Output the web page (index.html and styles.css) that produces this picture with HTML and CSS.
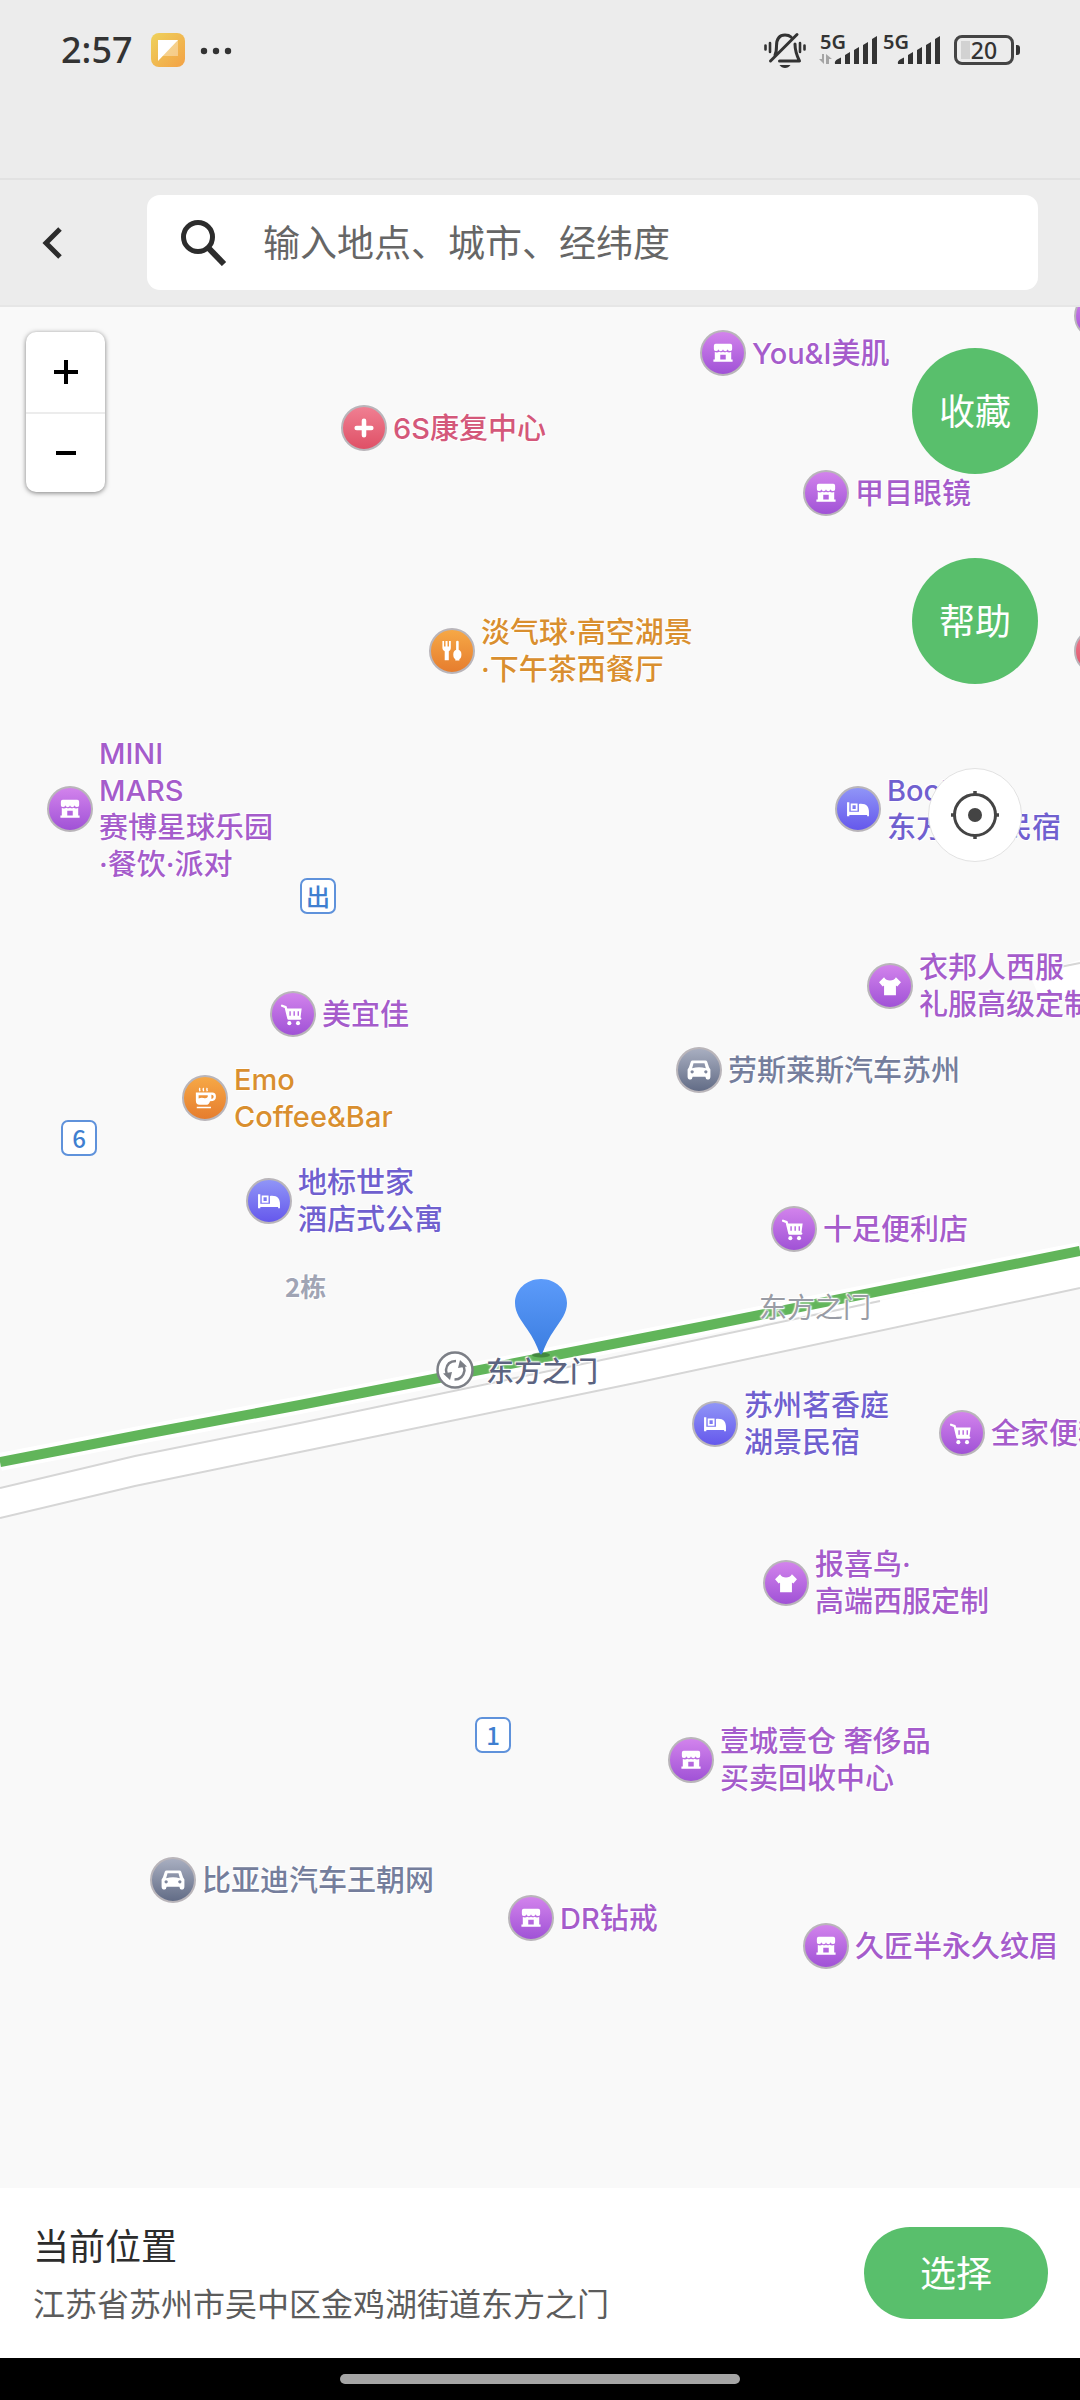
FILE: index.html
```
<!DOCTYPE html>
<html lang="zh-CN">
<head>
	<meta charset="UTF-8">
	<meta name="viewport" content="width=device-width, initial-scale=1">
	<title>选择位置</title>
	<link rel="stylesheet" href="styles.css">
</head>
<body>
	<!-- 图标 -->
	<svg class="sprite" aria-hidden="true">
		<symbol id="i-shop" viewBox="0 0 46 46">
			<path fill="#fff" d="M15 13h16q2 0 2 2v3.500a2.500 2 0 0 1-5 .5 2.500 2 0 0 1-5 0 2.500 2 0 0 1-5 0 2.500 2 0 0 1-5-.5V15q0-2 2-2z"/>
			<path fill="#fff" fill-rule="evenodd" d="M14 22q3 1 5-.5 2 1.200 4 0 2 1.200 4 0 2 1.500 5 .5v8h1.500v2.500h-21V30H14zM20 25v5h6v-5z"/>
		</symbol>
		<symbol id="i-cart" viewBox="0 0 46 46">
			<path fill="none" stroke="#fff" stroke-width="2.500" stroke-linecap="round" stroke-linejoin="round" d="M11 14l4 1.500 3 12.500h13"/>
			<path fill="#fff" fill-rule="evenodd" d="M16 17h16.500l-1.500 11.500H18.500zM19 20v5h1.600v-5zM23.500 20v5h1.600v-5zM28 20v5h1.600v-5z"/>
			<circle fill="#fff" cx="19" cy="33" r="2.200"/><circle fill="#fff" cx="28.500" cy="33" r="2.200"/>
		</symbol>
		<symbol id="i-bed" viewBox="0 0 46 46">
			<path fill="#fff" d="M11 15.500h2.500V26H35v5h-2v-1.500H13.500V31H11z"/>
			<path fill="#fff" fill-rule="evenodd" d="M15 17h7.500v8H15zM17 19v4h3.500v-4z"/>
			<path fill="#fff" d="M24 17.500c8-1 11 3 11 9H24z"/>
		</symbol>
		<symbol id="i-shirt" viewBox="0 0 46 46">
			<path fill="#fff" d="M16.500 13.500q2 3.500 6.500 3.500t6.500-3.500L35 19l-4 4.500-1.500-1V33h-13V22.500l-1.500 1L11 19z"/>
		</symbol>
		<symbol id="i-car" viewBox="0 0 46 46">
			<path fill="#fff" fill-rule="evenodd" d="M16 12.500h14q1.500 0 2 1.500l2 6 1.500 2.500V30q0 3.500-3.500 3.500-1.500 0-2-3H16q-.5 3-2 3-3.500 0-3.500-3.500v-7.500L12 20l2-6q.5-1.500 2-1.500zM17 15.500L15.500 21q7.500-2 15 0L29 15.500z"/>
			<circle fill="#7f879d" cx="15.500" cy="25" r="1.800"/><circle fill="#7f879d" cx="30.500" cy="25" r="1.800"/>
		</symbol>
		<symbol id="i-food" viewBox="0 0 46 46">
			<path fill="#fff" d="M12.500 12h1.800v6h1.600v-6h2.200v6h1.600v-6h2v8q0 2.500-2.200 3.200V33h-4.500v-9.800q-2.500-.7-2.500-3.200z"/>
			<path fill="#fff" d="M27.500 13q0-1.200 1.400-1.200t1.400 1.200v8.500q3 1 3 5.200t-2.200 5v1.800h-4.500v-1.800q-2.200-.8-2.200-5t3.100-5.200z"/>
		</symbol>
		<symbol id="i-cup" viewBox="0 0 46 46">
			<path fill="none" stroke="#fff" stroke-width="1.600" d="M17.500 12q-1 1 0 3.500M21.500 12q-1 1 0 3.500M25.500 12q-1 1 0 3.500"/>
			<path fill="#fff" fill-rule="evenodd" d="M13 17h17q5-.5 5 4.500T28.500 26.500q-1 4-4.500 4h-7q-4 0-4-4.500zM30 19.500v4.500q2.500 0 2.500-2.300T30 19.500zM16 20v3.500q3-1.500 5.500-.5T26 22v-2z"/>
			<path fill="#fff" d="M14 32.500h15.500v1.800H14z"/>
		</symbol>
		<symbol id="i-plus" viewBox="0 0 46 46">
			<path stroke="#fff" stroke-width="5" stroke-linecap="round" d="M23 15v16M15 23h16"/>
		</symbol>
	</svg>

	<!-- 状态栏 -->
	<div class="status">
		<span class="time">2:57</span>
		<svg class="app" viewBox="0 0 34 34" aria-hidden="true">
			<defs><linearGradient id="g-app" x1="0" y1="0" x2="1" y2="1"><stop offset="0" stop-color="#eed25c"/><stop offset="1" stop-color="#f3a145"/></linearGradient></defs>
			<rect width="34" height="34" rx="8" fill="url(#g-app)"/>
			<path fill="#fff" fill-opacity=".35" d="M7 7h20v16H7z"/>
			<path fill="#fff" d="M7 7h20L7 28z"/>
		</svg>
		<svg class="dots" viewBox="0 0 32 8" aria-hidden="true"><circle cx="4" cy="4" r="3.200"/><circle cx="16" cy="4" r="3.200"/><circle cx="28" cy="4" r="3.200"/></svg>
		<div class="signs">
			<svg class="bell" viewBox="0 0 42 36" aria-hidden="true">
				<path fill="none" stroke="#333" stroke-width="3" stroke-linecap="round" stroke-linejoin="round" d="M11 23q1.500-3 1.500-9C12.500 6 16 3 21 3q4 0 6 2M31 12q0 8 4.500 17H15.500M6.500 29L33 2.500"/>
				<path fill="none" stroke="#333" stroke-width="2.600" stroke-linecap="round" d="M1.500 13.500v4M6 11v9M36 11v9M40.500 13.500v4"/>
				<path fill="#333" d="M15.500 33h11q-2 3-5.500 3t-5.500-3z"/>
			</svg>
			<div class="signal">
				<span>5G</span>
				<svg viewBox="0 0 60 36" aria-hidden="true">
					<path fill="#a5a5a5" d="M4 22h2v10L1 27h3zM8 32V22l6 5h-3v5z"/>
					<path d="M17 32q-1-3 3-5l3-1.500V32zM27 23l5-3v12h-5zM36 18l5-3v17h-5zM45 13l5-3v22h-5zM54 7l5-3v28h-5z"/>
				</svg>
			</div>
			<div class="signal">
				<span>5G</span>
				<svg viewBox="0 0 60 36" aria-hidden="true">
					<path d="M17 32q-1-3 3-5l3-1.500V32zM27 23l5-3v12h-5zM36 18l5-3v17h-5zM45 13l5-3v22h-5zM54 7l5-3v28h-5z"/>
				</svg>
			</div>
			<span class="battery">20</span>
		</div>
	</div>

	<!-- 搜索栏 -->
	<header class="bar">
		<button class="back" type="button" aria-label="返回">
			<svg viewBox="0 0 22 32"><path fill="none" stroke="#2c2c2c" stroke-width="5" d="M19 2L5 16l14 14"/></svg>
		</button>
		<label class="search">
			<svg viewBox="0 0 46 46" aria-hidden="true"><circle cx="17" cy="17" r="14.500" fill="none" stroke="#2c2c2c" stroke-width="5"/><path stroke="#2c2c2c" stroke-width="6" d="M27.500 28L43 44"/></svg>
			<input type="text" placeholder="输入地点、城市、经纬度" aria-label="输入地点、城市、经纬度">
		</label>
	</header>

	<!-- 地图 -->
	<main class="map">
		<svg class="roads" viewBox="0 0 1080 1881" aria-hidden="true">
			<path fill="none" stroke="#fff" stroke-width="18" d="M0 1155L150 1126 300 1098 700 1020 1080 944"/>
			<path fill="#fff" d="M0 1181L135 1149 300 1116 640 1045 1080 951V981L640 1075 300 1145 135 1179 0 1211z"/>
			<path fill="none" stroke="#d6d6d6" stroke-width="2" d="M0 1181L135 1149 300 1116 640 1045 880 994M0 1211L135 1179 300 1145 640 1075 1080 981"/>
			<path fill="none" stroke="#61b55a" stroke-width="10" d="M0 1155L150 1126 300 1098 700 1020 1080 944"/>
			<path fill="#fff" d="M1030 668l50-15v33l-40 6z"/>
			<path fill="none" stroke="#d6d6d6" stroke-width="2" d="M1060 660l20-4"/>
		</svg>

		<div class="poi shop p1"><svg><use href="#i-shop"/></svg><span>You&amp;I美肌</span></div>
		<div class="poi red p2"><svg><use href="#i-plus"/></svg><span>6S康复中心</span></div>
		<div class="poi shop p3"><svg><use href="#i-shop"/></svg><span>甲目眼镜</span></div>
		<div class="poi food p4"><svg><use href="#i-food"/></svg><span>淡气球·高空湖景<br>·下午茶西餐厅</span></div>
		<div class="poi shop p5"><svg><use href="#i-shop"/></svg><span>MINI<br>MARS<br>赛博星球乐园<br>·餐饮·派对</span></div>
		<div class="poi shop p6"><svg><use href="#i-cart"/></svg><span>美宜佳</span></div>
		<div class="poi food p7"><svg><use href="#i-cup"/></svg><span>Emo<br>Coffee&amp;Bar</span></div>
		<div class="poi hotel p8"><svg><use href="#i-bed"/></svg><span>地标世家<br>酒店式公寓</span></div>
		<div class="poi hotel p9"><svg><use href="#i-bed"/></svg><span>Book<br>东方之门民宿</span></div>
		<div class="poi shop p10"><svg><use href="#i-shirt"/></svg><span>衣邦人西服<br>礼服高级定制</span></div>
		<div class="poi auto p11"><svg><use href="#i-car"/></svg><span>劳斯莱斯汽车苏州</span></div>
		<div class="poi shop p12"><svg><use href="#i-cart"/></svg><span>十足便利店</span></div>
		<div class="poi hotel p13"><svg><use href="#i-bed"/></svg><span>苏州茗香庭<br>湖景民宿</span></div>
		<div class="poi shop p14"><svg><use href="#i-cart"/></svg><span>全家便利店</span></div>
		<div class="poi shop p15"><svg><use href="#i-shirt"/></svg><span>报喜鸟·<br>高端西服定制</span></div>
		<div class="poi shop p16"><svg><use href="#i-shop"/></svg><span>壹城壹仓 奢侈品<br>买卖回收中心</span></div>
		<div class="poi shop p17"><svg><use href="#i-shop"/></svg><span>DR钻戒</span></div>
		<div class="poi shop p18"><svg><use href="#i-shop"/></svg><span>久匠半永久纹眉</span></div>
		<div class="poi auto p19"><svg><use href="#i-car"/></svg><span>比亚迪汽车王朝网</span></div>
		<div class="poi shop p20"><svg></svg></div>
		<div class="poi red p21"><svg></svg></div>

		<span class="exit e1">出</span>
		<span class="exit e2">6</span>
		<span class="exit e3">1</span>

		<span class="name building">2栋</span>
		<span class="name road">东方之门</span>
		<div class="metro">
			<svg viewBox="0 0 38 38" aria-hidden="true">
				<circle cx="19" cy="19" r="17.500" fill="#fff" stroke="#7c7f86" stroke-width="2.500"/>
				<path fill="none" stroke="#7c7f86" stroke-width="2.500" d="M20 10q-9 0-10 9 0 3 2 6M18.500 28.500q8.500 0 10-9 0-3-2-6"/>
				<path fill="#7c7f86" d="M7 22.500l9-1.500-2 8zM31 15.500L22 17l2-8z"/>
			</svg>
			<span>东方之门</span>
		</div>

		<svg class="pin" viewBox="0 0 52 80" aria-hidden="true">
			<defs><linearGradient id="g-pin" x1="0" y1="0" x2="0" y2="1"><stop offset="0" stop-color="#5c9bfa"/><stop offset="1" stop-color="#3b7de0"/></linearGradient></defs>
			<ellipse cx="26" cy="76" rx="9" ry="2.500" fill="#2f6b2c" fill-opacity=".6"/>
			<path fill="url(#g-pin)" d="M26 0C11 0 0 11 0 24c0 10 6 17 12 26 6 8 10 17 12.500 24q1.500 3 3 0C30 67 34 58 40 50c6-9 12-16 12-26C52 11 41 0 26 0z"/>
		</svg>

		<div class="zoom">
			<button type="button" aria-label="放大"><svg viewBox="0 0 24 24"><path stroke="#000" stroke-width="4" d="M12 0v24M0 12h24"/></svg></button>
			<button type="button" aria-label="缩小"><svg viewBox="0 0 24 24"><path stroke="#000" stroke-width="4" d="M2 12h20"/></svg></button>
		</div>

		<div class="tools">
			<button class="round" type="button">收藏</button>
			<button class="round" type="button">帮助</button>
			<button class="locate" type="button" aria-label="定位">
				<svg viewBox="0 0 50 50"><circle cx="25" cy="25" r="20.500" fill="none" stroke="#444" stroke-width="3"/><circle cx="25" cy="25" r="7" fill="#444"/><path stroke="#444" stroke-width="3.500" d="M25 1v5M25 44v5M1 25h5M44 25h5"/></svg>
			</button>
		</div>
	</main>

	<!-- 当前位置 -->
	<footer class="place">
		<div class="info">
			<h2>当前位置</h2>
			<p>江苏省苏州市吴中区金鸡湖街道东方之门</p>
		</div>
		<button class="choose" type="button">选择</button>
	</footer>
	<div class="home"><i></i></div>
</body>
</html>
```
FILE: styles.css
```
*{box-sizing: border-box;margin: 0;padding: 0;}
body{min-height: 100vh;display: flex;flex-direction: column;background: #ececec;color: #2c2c2c;font-family: "Noto Sans CJK SC",sans-serif;overflow-x: hidden;}
button{border: 0;background: none;font: inherit;cursor: pointer;}
svg{display: block;flex: none;}
.sprite{position: absolute;width: 0;height: 0;}

/* 状态栏 */
.status{height: 180px;padding: 24px 66px 0 61px;display: flex;align-items: flex-start;border-bottom: 2px solid #e2e2e2;}
.time{width: 90px;line-height: 52px;font-family: "Noto Sans",sans-serif;font-size: 36px;font-weight: 500;color: #333;}
.app{width: 34px;height: 34px;margin-top: 9px;}
.dots{width: 32px;height: 8px;margin: 23px 0 0 15px;fill: #333;}
.signs{margin-left: auto;height: 52px;display: flex;align-items: center;}
.bell{width: 42px;height: 36px;margin-right: 12px;}
.signal{display: grid;margin-right: 3px;color: #333;fill: #333;}
.signal>*{grid-area: 1/1;}
.signal svg{width: 60px;height: 36px;}
.signal span{padding-left: 2px;font: 600 20px/20px "Noto Sans",sans-serif;}
.battery{width: 60px;height: 30px;margin-left: 10px;border: 3px solid #444;border-radius: 8px;background: linear-gradient(#d2d2d2,#d2d2d2) 4px center/9px 18px no-repeat;position: relative;font: 500 23px/24px "Noto Sans",sans-serif;text-align: center;color: #333;}
.battery::after{content: "";position: absolute;right: -9px;top: 7px;width: 4px;height: 10px;border-radius: 0 3px 3px 0;background: #333;}

/* 搜索栏 */
.bar{height: 127px;padding: 15px 42px 15px 0;display: flex;align-items: stretch;border-bottom: 2px solid #e6e6e6;}
.back{width: 147px;padding-left: 41px;display: flex;align-items: center;}
.back svg{width: 22px;height: 32px;}
.search{flex: 1;display: flex;align-items: center;gap: 36px;padding: 0 34px;background: #fff;border-radius: 13px;}
.search svg{width: 46px;height: 46px;}
.search input{flex: 1;min-width: 0;padding-bottom: 4px;border: 0;outline: 0;background: none;font: 37px/54px "Noto Sans CJK SC",sans-serif;color: #2c2c2c;}
.search input::placeholder{color: #666;opacity: 1;}

/* 地图 */
.map{flex: 1;min-height: 1700px;position: relative;overflow: hidden;background: #f9f9f9;}
.roads{position: absolute;left: 0;top: 0;width: 1080px;height: 1881px;}
.poi{position: absolute;transform: translateY(-50%);display: flex;align-items: center;gap: 6px;white-space: nowrap;font-family: Inter,"Noto Sans CJK SC",sans-serif;font-size: 29px;line-height: 37px;font-weight: 500;}
.poi span,.name,.metro span{text-shadow: 0 0 2px #fff,0 0 3px #fff,1px 1px 1px #fff,-1px -1px 1px #fff;}
.poi svg{width: 46px;height: 46px;border: 2px solid #b9b5ba;border-radius: 50%;}
.shop{color: #a55ccb;}
.shop svg{background: linear-gradient(#d283ec,#a052d6);}
.red{color: #d4587a;}
.red svg{background: linear-gradient(#f07f92,#df5066);}
.food{color: #d98f2f;}
.food svg{background: linear-gradient(#f6a846,#e67d2e);}
.hotel{color: #7060cf;}
.hotel svg{background: linear-gradient(#9095f7,#6558ec);}
.auto{color: #757e9c;}
.auto svg{background: linear-gradient(#a8aec0,#626c86);}
.p1{left: 700px;top: 46px;}
.p2{left: 341px;top: 121px;}
.p3{left: 803px;top: 186px;}
.p4{left: 429px;top: 344px;}
.p5{left: 47px;top: 502px;}
.p6{left: 270px;top: 707px;}
.p7{left: 182px;top: 791px;}
.p8{left: 246px;top: 894px;}
.p9{left: 835px;top: 502px;}
.p10{left: 867px;top: 679px;}
.p11{left: 676px;top: 763px;}
.p12{left: 771px;top: 922px;}
.p13{left: 692px;top: 1117px;}
.p14{left: 939px;top: 1126px;}
.p15{left: 763px;top: 1276px;}
.p16{left: 668px;top: 1453px;}
.p17{left: 508px;top: 1611px;}
.p18{left: 803px;top: 1639px;}
.p19{left: 150px;top: 1573px;}
.p20{left: 1074px;top: 9px;}
.p21{left: 1074px;top: 344px;}

.exit{position: absolute;width: 36px;height: 36px;border: 2px solid #5f92db;border-radius: 7px;background: #fff;color: #3f7fd0;font-size: 24px;line-height: 32px;font-weight: 500;text-align: center;}
.e1{left: 300px;top: 571px;}
.e2{left: 61px;top: 813px;}
.e3{left: 475px;top: 1410px;}
.name{position: absolute;font-size: 28px;line-height: 38px;color: #999ca5;}
.building{left: 285px;top: 960px;font-size: 26px;font-weight: 700;color: #a0a4b4;}
.road{left: 759px;top: 980px;}
.metro{position: absolute;left: 436px;top: 1044px;display: flex;align-items: center;gap: 12px;font-size: 28px;line-height: 38px;font-weight: 500;color: #5c6480;}
.metro svg{width: 38px;height: 38px;}
.pin{position: absolute;left: 50%;top: 972px;width: 52px;height: 80px;margin-left: -25px;}

.zoom{position: absolute;left: 26px;top: 25px;width: 79px;background: #fff;border-radius: 10px;box-shadow: 0 1px 5px rgba(0,0,0,.5);}
.zoom button{width: 100%;height: 80px;display: flex;align-items: center;justify-content: center;}
.zoom button+button{border-top: 2px solid #ececec;}
.zoom svg{width: 24px;height: 24px;}
.tools{position: absolute;right: 42px;top: 41px;display: flex;flex-direction: column;align-items: center;gap: 84px;}
.round{width: 126px;height: 126px;padding-bottom: 4px;border-radius: 50%;background: #59bf6c;color: #fff;font-size: 36px;line-height: 54px;}
.locate{width: 94px;height: 94px;border: 1px solid #e2e2e2;border-radius: 50%;background: #fff;display: flex;align-items: center;justify-content: center;}
.locate svg{width: 50px;height: 50px;}

/* 当前位置 */
.place{height: 170px;padding: 0 32px 0 33px;display: flex;align-items: center;justify-content: space-between;background: #fff;}
.info h2{font-size: 36px;line-height: 58px;font-weight: 400;color: #2c2c2c;}
.info p{font-size: 32px;line-height: 58px;color: #5c5c5c;}
.choose{width: 184px;height: 92px;padding-bottom: 4px;border-radius: 46px;background: #59bf6c;color: #fff;font-size: 36px;}
.home{height: 42px;display: flex;align-items: center;justify-content: center;background: #000;}
.home i{width: 400px;height: 10px;border-radius: 5px;background: #a5a5a5;}
```
